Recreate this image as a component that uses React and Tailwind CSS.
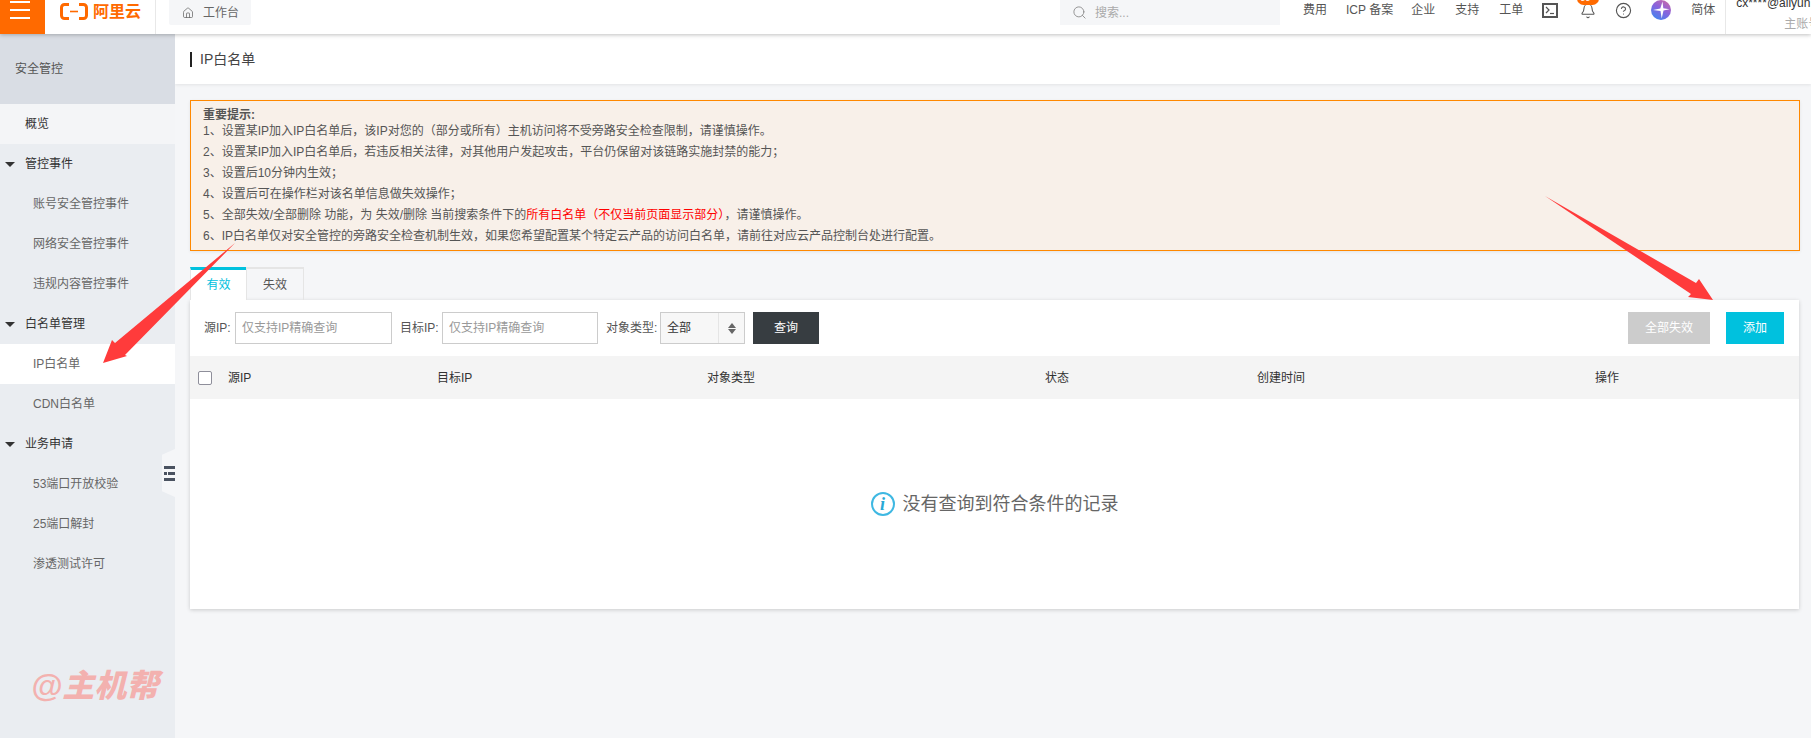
import React from "react";
import { Bell, CircleHelp, House, Search } from "lucide-react";

const Row = ({ children, type, active }) => {
    if (type === "group") {
        return (
            <div className="h-10 flex items-center text-[#333]">
                <span className="ml-[5px] mr-[10px] w-0 h-0 border-x-[5px] border-x-transparent border-t-[5px] border-t-[#333]"></span>
                {children}
            </div>
        );
    }
    return (
        <div className={`h-10 flex items-center pl-[33px] text-[#666] ${active ? "bg-white" : ""}`}>{children}</div>
    );
};

const NavLink = ({ children }) => <span className="text-[12px] text-[#555] whitespace-pre">{children}</span>;

const App = () => {
    return (
        <div className="relative w-full h-[738px] overflow-hidden bg-[#f5f6f8] text-[12px] text-[#555] font-['Liberation_Sans','Noto_Sans_CJK_SC',sans-serif]">
            {/* top bar */}
            <header className="relative z-10 h-[34px] flex bg-white shadow-[0_1px_4px_rgba(0,0,0,0.25)]">
                <div className="w-[45px] h-full bg-[#ff6a00] flex flex-col gap-[6px] pl-[10px] pt-[1px]">
                    <span className="block w-5 h-[2px] bg-white"></span>
                    <span className="block w-5 h-[2px] bg-white"></span>
                    <span className="block w-5 h-[2px] bg-white"></span>
                </div>
                <div className="w-[111px] h-full flex items-start pt-[3px] pl-[15px] gap-[5px] border-r border-[#e8e8e8]">
                    <svg width="28" height="17" viewBox="0 0 28 17" fill="none" stroke="#ff6a00" strokeWidth="3">
                        <path d="M9 1.5H4.5a3 3 0 0 0-3 3v8a3 3 0 0 0 3 3H9" />
                        <path d="M19 1.5h4.5a3 3 0 0 1 3 3v8a3 3 0 0 1-3 3H19" />
                        <path d="M10 8.5h8" strokeWidth="1.6" />
                    </svg>
                    <span className="text-[16px] leading-[18px] font-bold text-[#ff6a00]">阿里云</span>
                </div>
                <div className="ml-[13px] w-[82px] h-[25px] bg-[#f5f6f8] rounded-b-[2px] flex items-center pl-[13px] gap-[9px] text-[#666]">
                    <House size={12} strokeWidth={1.5} />
                    <span>工作台</span>
                </div>
                <div className="ml-[809px] w-[220px] h-[25px] bg-[#f5f6f8] flex items-center pl-[12px] gap-[8px] text-[#aaa]">
                    <Search size={15} strokeWidth={1.4} className="text-[#888]" />
                    <span>搜索...</span>
                </div>
                <div className="h-5 flex items-center ml-[23px]">
                    <NavLink>费用</NavLink>
                    <span className="ml-[19px]"><NavLink>ICP 备案</NavLink></span>
                    <span className="ml-[18px]"><NavLink>企业</NavLink></span>
                    <span className="ml-[20px]"><NavLink>支持</NavLink></span>
                    <span className="ml-[20px]"><NavLink>工单</NavLink></span>
                    <svg className="ml-[19px]" width="16" height="15" viewBox="0 0 16 15" fill="none" stroke="#555">
                        <rect x="1" y="1" width="14" height="13" strokeWidth="2" />
                        <path d="M4 4l3 3-3 3" strokeWidth="1.2" />
                        <path d="M8 10.5h4" strokeWidth="1.2" />
                    </svg>
                    <span className="relative ml-[22px] block">
                        <Bell size={16} strokeWidth={1.6} className="text-[#555] mt-[2px]" />
                        <span className="absolute -top-[9px] -left-[3px] w-[22px] h-[13px] rounded-full bg-[#ff6a00] text-white text-[9px] leading-[13px] text-center">99+</span>
                    </span>
                    <CircleHelp size={17} strokeWidth={1.6} className="ml-[19px] text-[#555]" />
                    <svg className="ml-[19px]" width="20" height="20" viewBox="0 0 20 20">
                        <defs>
                            <linearGradient id="gem" x1="0.2" y1="1" x2="0.8" y2="0">
                                <stop offset="0" stopColor="#3f86f0" />
                                <stop offset="0.55" stopColor="#8a63dc" />
                                <stop offset="1" stopColor="#c86aa8" />
                            </linearGradient>
                        </defs>
                        <circle cx="10" cy="10" r="10" fill="url(#gem)" />
                        <path d="M11.5 1.5l.8 6.7 6.2 1-6 1.4-1.8 7.9-1.2-7.6-7.5-1 7.3-1.3z" fill="#fff" />
                    </svg>
                    <span className="ml-5"><NavLink>简体</NavLink></span>
                </div>
                <div className="ml-[10px] flex-1 h-full border-l border-[#e8e8e8] pl-[10px] overflow-hidden whitespace-nowrap">
                    <div className="-mt-[5px] text-[12px] leading-[16px] text-[#333]">cx****@aliyun...</div>
                    <div className="mt-[6px] ml-[48px] leading-[14px] text-[#aaa]">主账号</div>
                </div>
            </header>

            <div className="flex h-[704px]">
                {/* sidebar */}
                <aside className="relative w-[175px] shrink-0 bg-[#eaedf1] flex flex-col">
                    <div className="h-[70px] bg-[#d9dde4] flex items-center pl-[15px] text-[#555]">安全管控</div>
                    <div className="h-10 flex items-center pl-[25px] bg-[#f4f5f7] text-[#333]">概览</div>
                    <Row type="group">管控事件</Row>
                    <Row>账号安全管控事件</Row>
                    <Row>网络安全管控事件</Row>
                    <Row>违规内容管控事件</Row>
                    <Row type="group">白名单管理</Row>
                    <Row active>IP白名单</Row>
                    <Row>CDN白名单</Row>
                    <Row type="group">业务申请</Row>
                    <Row>53端口开放校验</Row>
                    <Row>25端口解封</Row>
                    <Row>渗透测试许可</Row>
                    <div className="mt-[84px] ml-[31px] text-[32px] leading-[36px] font-black italic text-[#f3b1af] whitespace-nowrap">@主机帮</div>
                    {/* collapse handle */}
                    <div className="absolute right-0 top-[415px] w-[13px] h-[48px] bg-[#f5f6f8] [clip-path:polygon(100%_0,100%_100%,0_88%,0_12%)] flex items-center justify-end">
                        <svg width="11" height="15" viewBox="0 0 11 15" fill="#4a5260">
                            <rect x="0" y="0" width="11" height="3" />
                            <rect x="0" y="6" width="3" height="3" />
                            <rect x="4" y="6" width="7" height="3" />
                            <rect x="0" y="12" width="11" height="3" />
                        </svg>
                    </div>
                </aside>

                {/* main */}
                <main className="flex-1 min-w-0">
                    <div className="h-[50px] bg-white shadow-[0_1px_3px_rgba(0,0,0,0.08)] flex items-center pl-[15px]">
                        <span className="w-[2px] h-[15px] bg-[#222] mr-2"></span>
                        <h1 className="text-[14px] text-[#444]">IP白名单</h1>
                    </div>

                    <div className="mt-4 ml-[15px] mr-[11px] h-[151px] border border-[#ff8800] bg-[#f8f0e9] pt-[7px] pl-[12px] shadow-[0_1px_3px_rgba(0,0,0,0.08)]">
                        <p className="h-[13px] leading-[14px] font-bold">重要提示:</p>
                        <p className="leading-[21px]">1、设置某IP加入IP白名单后，该IP对您的（部分或所有）主机访问将不受旁路安全检查限制，请谨慎操作。</p>
                        <p className="leading-[21px]">2、设置某IP加入IP白名单后，若违反相关法律，对其他用户发起攻击，平台仍保留对该链路实施封禁的能力；</p>
                        <p className="leading-[21px]">3、设置后10分钟内生效；</p>
                        <p className="leading-[21px]">4、设置后可在操作栏对该名单信息做失效操作；</p>
                        <p className="leading-[21px]">5、全部失效/全部删除 功能，为 失效/删除 当前搜索条件下的<span className="text-[#ff0000]">所有白名单（不仅当前页面显示部分）</span>，请谨慎操作。</p>
                        <p className="leading-[21px]">6、IP白名单仅对安全管控的旁路安全检查机制生效，如果您希望配置某个特定云产品的访问白名单，请前往对应云产品控制台处进行配置。</p>
                    </div>

                    {/* tabs */}
                    <div className="mt-4 ml-[15px] flex h-[33px]">
                        <div className="w-[56px] bg-white border-t-[3px] border-t-[#00c1de] border-l border-l-[#e5e5e5] flex items-center justify-center text-[#00c1de]">有效</div>
                        <div className="w-[58px] border border-[#e5e5e5] border-b-0 border-t-2 flex items-center justify-center text-[#555]">失效</div>
                    </div>

                    {/* panel */}
                    <section className="ml-[15px] mr-3 h-[309px] bg-white shadow-[0_1px_4px_rgba(0,0,0,0.18)] flex flex-col">
                        <div className="mt-3 h-8 flex items-center pl-[14px] pr-[15px] shrink-0">
                            <label className="w-[31px]">源IP:</label>
                            <input className="w-[157px] h-8 border border-[#ccc] pl-[6px] text-[12px] outline-none placeholder:text-[#999]" placeholder="仅支持IP精确查询" />
                            <label className="ml-2 w-[42px]">目标IP:</label>
                            <input className="w-[156px] h-8 border border-[#ccc] pl-[6px] text-[12px] outline-none placeholder:text-[#999]" placeholder="仅支持IP精确查询" />
                            <label className="ml-2 w-[54px]">对象类型:</label>
                            <div className="w-[85px] h-8 border border-[#ccc] bg-[#f7f7f7] flex items-center">
                                <span className="flex-1 pl-[6px] text-[#333]">全部</span>
                                <span className="w-[26px] h-full border-l border-[#e5e5e5] flex flex-col items-center justify-center gap-[1px]">
                                    <span className="w-0 h-0 border-x-[4px] border-x-transparent border-b-[5px] border-b-[#666]"></span>
                                    <span className="w-0 h-0 border-x-[4px] border-x-transparent border-t-[5px] border-t-[#666]"></span>
                                </span>
                            </div>
                            <button className="ml-2 w-[66px] h-8 bg-[#373d41] text-white text-[12px]">查询</button>
                            <button className="ml-auto w-[82px] h-8 bg-[#ccc] text-white text-[12px]">全部失效</button>
                            <button className="ml-4 w-[58px] h-8 bg-[#00c1de] text-white text-[12px]">添加</button>
                        </div>

                        <table className="mt-3 w-full table-fixed shrink-0">
                            <thead>
                                <tr className="h-[43px] bg-[#f4f4f4] text-left text-[#333]">
                                    <th className="w-[38px] font-normal pl-2">
                                        <span className="block w-[14px] h-[14px] bg-white border border-[#8e8e9a] rounded-[2px]"></span>
                                    </th>
                                    <th className="w-[209px] font-normal">源IP</th>
                                    <th className="w-[270px] font-normal">目标IP</th>
                                    <th className="w-[338px] font-normal">对象类型</th>
                                    <th className="w-[212px] font-normal">状态</th>
                                    <th className="w-[338px] font-normal">创建时间</th>
                                    <th className="font-normal">操作</th>
                                </tr>
                            </thead>
                        </table>

                        <div className="flex-1 flex items-center justify-center gap-2">
                            <span className="w-6 h-6 rounded-full border-2 border-[#3fb8e2] flex items-center justify-center text-[#28a9d6] text-[18px] leading-none italic font-bold font-['Liberation_Serif',serif]">i</span>
                            <span className="text-[18px] text-[#666]">没有查询到符合条件的记录</span>
                        </div>
                    </section>
                </main>
            </div>

            {/* annotation arrows */}
            <svg className="absolute inset-0 z-20 pointer-events-none" width="1811" height="738" viewBox="0 0 1811 738" fill="#ff3b3b">
                <polygon points="235,243 125,355 127,356 103,363 112,340 115,343" />
                <polygon points="1545,196 1696,283 1699,279 1713,300 1688,297 1691,294" />
            </svg>
        </div>
    );
};

export default App;
